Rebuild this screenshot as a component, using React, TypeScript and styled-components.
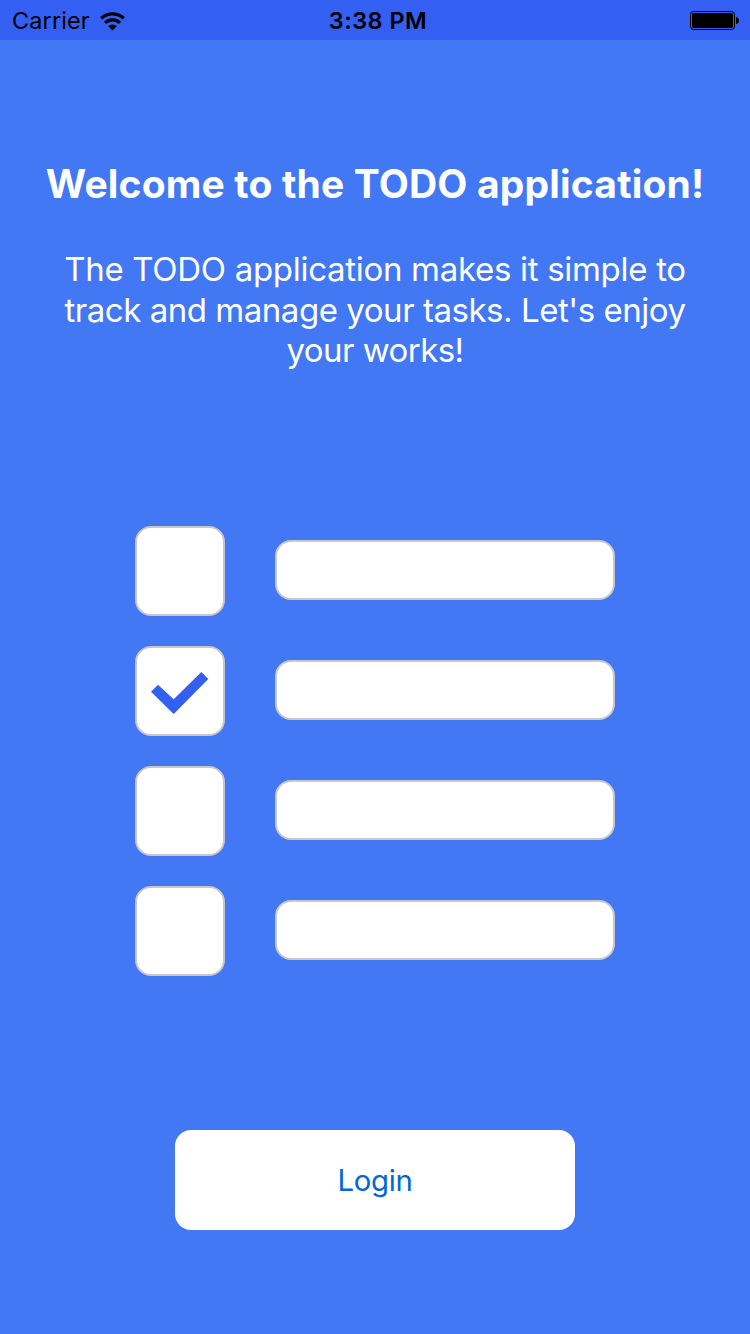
import React from 'react';
import styled, { createGlobalStyle } from 'styled-components';

const Global = createGlobalStyle`
  *{box-sizing:border-box}
  body{margin:0;background:#4278f4;font-family:Inter,"Liberation Sans",sans-serif}
`;
const Screen = styled.main`
  width:750px;height:1334px;background:#4278f4;display:flex;flex-direction:column;align-items:center;overflow:hidden;
`;
const StatusBar = styled.header`
  width:100%;height:40px;flex:none;background:#335ff3;color:#000;display:grid;grid-template-columns:1fr auto 1fr;
  align-items:center;padding:2px 11px 0 12px;font-size:23.5px;line-height:38px;
`;
const Carrier = styled.div`display:flex;align-items:center;gap:10px;letter-spacing:.1px;`;
const Clock = styled.time`font-weight:600;letter-spacing:.45px;padding-left:5px;`;
const Battery = styled.svg`justify-self:end;`;
const Title = styled.h1`
  margin:120px 0 0;font-size:39px;line-height:48px;font-weight:700;color:#fff;white-space:nowrap;letter-spacing:.18px;
`;
const Description = styled.p`
  margin:41px 0 0;font-size:33px;line-height:40.5px;color:#fff;text-align:center;white-space:nowrap;
`;
const TextLine = styled.span<{ $tracking: number }>`display:block;letter-spacing:${p => p.$tracking}px;`;
const Tasks = styled.ul`
  list-style:none;margin:155.5px 0 0;padding:0;display:flex;flex-direction:column;gap:30px;
`;
const Task = styled.li`display:flex;align-items:center;gap:50px;height:90px;`;
const Box = styled.span`
  width:90px;height:90px;border:2px solid #c8c8c8;border-radius:16px;background:#fff;display:flex;align-items:center;justify-content:center;
`;
const Line = styled.span`width:340px;height:60px;margin-bottom:2px;border:2px solid #c8c8c8;border-radius:16px;background:#fff;`;
const Login = styled.button`
  margin:154px 0 0;width:400px;height:100px;border:0;border-radius:16px;background:#fff;color:#0067d8;
  font:400 29.3px/100px Inter,"Liberation Sans",sans-serif;padding:1px 0 0;letter-spacing:-.3px;
`;
const tasks = [false, true, false, false];

export default function App() {
  return (
    <Screen>
      <Global />
      <StatusBar>
        <Carrier>
          <span>Carrier</span>
          <svg width="26" height="19" viewBox="0 0 26 19" fill="none" stroke="#000" strokeWidth="3.2">
            <path d="M1.2 6.2a16.7 16.7 0 0 1 22.6 0" />
            <path d="M5 10.8a10.9 10.9 0 0 1 15 0" />
            <path d="M12.5 18.5l-4.2-4.3a5.9 5.9 0 0 1 8.4 0z" fill="#000" stroke="none" />
          </svg>
        </Carrier>
        <Clock>3:38 PM</Clock>
        <Battery width="49" height="20" viewBox="0 0 49 20">
          <rect x=".5" y=".5" width="44" height="18" rx="3" fill="none" stroke="#000" />
          <rect x="2" y="2" width="41" height="15" rx="1.5" />
          <path d="M46 6q3 .5 3 3.5t-3 3.5z" />
        </Battery>
      </StatusBar>
      <Title>Welcome to the TODO application!</Title>
      <Description>
        <TextLine $tracking={-0.3}>The TODO application makes it simple to</TextLine>
        <TextLine $tracking={-0.46}>track and manage your tasks. Let's enjoy</TextLine>
        <TextLine $tracking={-0.55}>your works!</TextLine>
      </Description>
      <Tasks>
        {tasks.map((done, i) => (
          <Task key={i}>
            <Box>
              {done && (
                <svg width="58" height="46" viewBox="0 0 58 46" fill="#335ff3">
                  <path d="M0 23.7L7 16.7L22.7 31.3L50.3 4L57.3 11L22.7 46Z" />
                </svg>
              )}
            </Box>
            <Line />
          </Task>
        ))}
      </Tasks>
      <Login>Login</Login>
    </Screen>
  );
}
